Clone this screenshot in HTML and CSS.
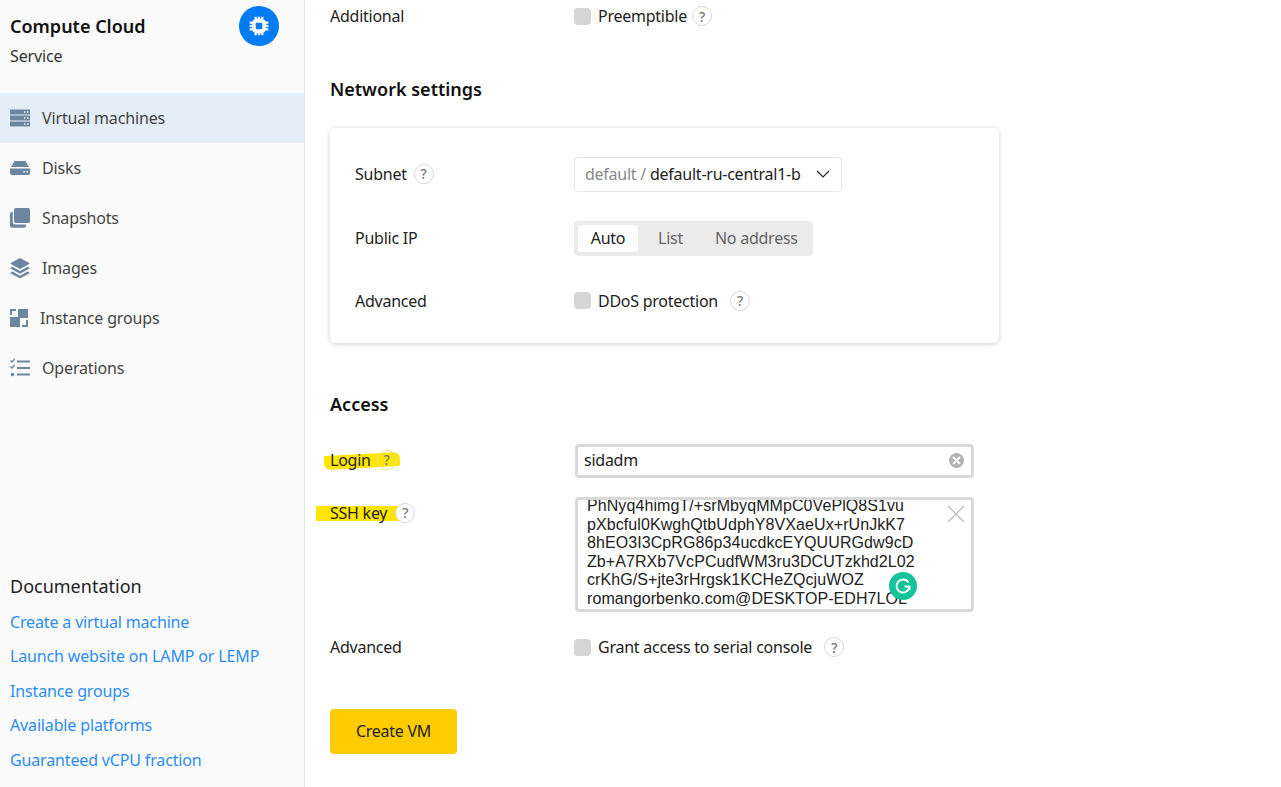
FILE: index.html
```html
<!DOCTYPE html>
<html lang="en">
<head>
    <meta charset="UTF-8">
    <meta name="viewport" content="width=device-width, initial-scale=1.0">
    <title>Compute Cloud</title>
    <link rel="stylesheet" href="styles.css">
</head>
<body>
    <aside class="sidebar">
        <div class="service">
            <div>
                <h1 class="service-name">Compute Cloud</h1>
                <p class="service-type">Service</p>
            </div>
            <span class="service-logo">
                <svg width="22" height="22" viewBox="0 0 20 20">
                    <path fill="#fff" d="M6 1.500h2v2h1v-2h2v2h1v-2h2v2.700A2 2 0 0 1 15.800 6h2.700v2h-2v1h2v2h-2v1h2v2h-2.700a2 2 0 0 1-1.800 1.800v2.700h-2v-2h-1v2H9v-2H8v2H6v-2.700A2 2 0 0 1 4.200 14H1.500v-2h2v-1h-2V9h2V8h-2V6h2.700A2 2 0 0 1 6 4.200z"/>
                    <rect x="7" y="7" width="6" height="6" rx="1" fill="#027bf3"/>
                </svg>
            </span>
        </div>
        <nav class="menu">
            <a class="menu-item active">
                <svg class="menu-icon" viewBox="0 0 20 20"><path fill-rule="evenodd" d="M0 1.500h20v5H0zM0 7.500h20v5H0zM0 13.500h20v5H0zM14 3.300v1.400h1.500V3.300zM17 3.300v1.400h1.500V3.300zM14 9.300v1.400h1.500V9.300zM17 9.300v1.400h1.500V9.300zM14 15.300v1.400h1.500v-1.400zM17 15.300v1.400h1.500v-1.400z"/></svg>
                Virtual machines
            </a>
            <a class="menu-item">
                <svg class="menu-icon" viewBox="0 0 20 20"><path fill-rule="evenodd" d="M4.500 3h11L19 9H1zM0 10.500h20V15a2 2 0 0 1-2 2H2a2 2 0 0 1-2-2zM13.500 13v1.500H15V13zM16.500 13v1.500H18V13z"/></svg>
                Disks
            </a>
            <a class="menu-item">
                <svg class="menu-icon" viewBox="0 0 20 20"><rect x="4" y="0" width="16" height="15" rx="2"/><path d="M0 6a2 2 0 0 1 2-2h0.800v10a2.500 2.500 0 0 0 2.500 2.500H16v1.300a2 2 0 0 1-2 2H2a2 2 0 0 1-2-2z"/></svg>
                Snapshots
            </a>
            <a class="menu-item">
                <svg class="menu-icon" viewBox="0 0 20 20"><path d="M10 0l10 5.500-10 5.500L0 5.500zM2.500 8.800L10 13l7.500-4.200L20 10.200 10 15.800 0 10.200zM2.500 13.500L10 17.700l7.500-4.200L20 15l-10 5.500L0 15z"/></svg>
                Images
            </a>
            <a class="menu-item">
                <svg class="menu-icon menu-icon-wide" viewBox="0 0 18 18"><path d="M6 0H0v6h2V2h4zM8 0h10v9H8zM0 8h10v10H0zM12 11h6v7h-6v-2h4v-5h-4z"/></svg>
                Instance groups
            </a>
            <a class="menu-item">
                <svg class="menu-icon" viewBox="0 0 20 20"><path d="M7 2.500h13v2H7zM7 9h13v2H7zM7 15.500h13v2H7z"/><path d="M0.500 2.500l1.500 1.500 2.800-3" fill="none" stroke="#6d86a0" stroke-width="1.300"/><path d="M0.500 8.500l1.500 1.500 2.800-3" fill="none" stroke="#6d86a0" stroke-width="1.300"/><circle cx="2.500" cy="16.500" r="1.800"/></svg>
                Operations
            </a>
        </nav>
        <div class="docs">
            <h2 class="docs-title">Documentation</h2>
            <a class="docs-link">Create a virtual machine</a>
            <a class="docs-link">Launch website on LAMP or LEMP</a>
            <a class="docs-link">Instance groups</a>
            <a class="docs-link">Available platforms</a>
            <a class="docs-link">Guaranteed vCPU fraction</a>
        </div>
    </aside>

    <main class="content">
        <div class="row row-additional">
            <span class="row-label">Additional</span>
            <span class="check"></span>
            <span class="check-label">Preemptible</span>
            <span class="hint hint-near">?</span>
        </div>

        <h2 class="section-title section-network">Network settings</h2>

        <section class="card">
            <div class="card-row">
                <span class="card-label card-label-subnet">Subnet <span class="hint hint-label">?</span></span>
                <div class="select">
                    <span class="select-folder">default /</span>
                    <span>default-ru-central1-b</span>
                    <svg class="select-arrow" width="14" height="8" viewBox="0 0 14 8"><path d="M1 1l6 6 6-6" fill="none" stroke="#222" stroke-width="1.200"/></svg>
                </div>
            </div>
            <div class="card-row">
                <span class="card-label">Public IP</span>
                <div class="switch">
                    <span class="switch-item switch-on">Auto</span>
                    <span class="switch-item">List</span>
                    <span class="switch-item">No address</span>
                </div>
            </div>
            <div class="card-row">
                <span class="card-label">Advanced</span>
                <span class="check"></span>
                <span class="check-label">DDoS protection</span>
                <span class="hint hint-far">?</span>
            </div>
        </section>

        <h2 class="section-title section-access">Access</h2>

        <div class="row row-login">
            <span class="row-label marked">
                <span class="marker marker-login"></span>
                <span class="marked-text">Login <span class="hint hint-login">?</span></span>
            </span>
            <div class="field">
                <span class="field-value">sidadm</span>
                <span class="field-clear">
                    <svg width="9" height="9" viewBox="0 0 9 9"><path d="M1 1l7 7M8 1L1 8" stroke="#fff" stroke-width="1.800"/></svg>
                </span>
            </div>
        </div>

        <div class="row row-ssh">
            <span class="row-label marked">
                <span class="marker marker-ssh"></span>
                <span class="marked-text">SSH key<span class="hint hint-ssh">?</span></span>
            </span>
            <div class="keybox">
                <div class="keybox-text">PhNyq4himgT/+srMbyqMMpC0VePlQ8S1vu<br>pXbcful0KwghQtbUdphY8VXaeUx+rUnJkK7<br>8hEO3I3CpRG86p34ucdkcEYQUURGdw9cD<br>Zb+A7RXb7VcPCudfWM3ru3DCUTzkhd2L02<br>crKhG/S+jte3rHrgsk1KCHeZQcjuWOZ<br>romangorbenko.com@DESKTOP-EDH7LOL</div>
                <svg class="keybox-close" width="18" height="18" viewBox="0 0 18 18"><path d="M1 1l16 16M17 1L1 17" stroke="#b5b5b5" stroke-width="1.100"/></svg>
                <span class="grammarly">
                    <svg width="18" height="18" viewBox="0 0 18 18"><path d="M14.500 5.500A6.500 6.500 0 1 0 15.500 9.500H10.500M15.500 9.500v3.500" fill="none" stroke="#fff" stroke-width="1.900"/></svg>
                </span>
            </div>
        </div>

        <div class="row row-serial">
            <span class="row-label">Advanced</span>
            <span class="check"></span>
            <span class="check-label">Grant access to serial console</span>
            <span class="hint hint-far">?</span>
        </div>

        <button class="create-btn">Create VM</button>
    </main>
</body>
</html>
```

FILE: styles.css
```css
*{
    box-sizing: border-box;
    font-family: "Noto Sans", Arial, sans-serif;
}
html, body{
    height: 100%;
}
body{
    margin: 0;
    display: flex;
    height: 787px;
    overflow: hidden;
    background-color: white;
    color: #222;
    font-size: 16px;
}
h1, h2, p{
    margin: 0;
}

/* sidebar */
.sidebar{
    width: 305px;
    flex-shrink: 0;
    display: flex;
    flex-direction: column;
    background-color: #fafafa;
    border-right: 1px solid #e6e6e6;
    letter-spacing: -0.15px;
}
.service{
    height: 93px;
    padding: 7px 25px 0 10px;
    display: flex;
    justify-content: space-between;
    align-items: flex-start;
}
.service-name{
    font-size: 18px;
    font-weight: 600;
    line-height: 26px;
    margin-top: 6px;
    letter-spacing: 0;
    color: #111;
}
.service-type{
    line-height: 22px;
    margin-top: 6px;
    color: #333;
}
.service-logo{
    width: 40px;
    height: 40px;
    margin-top: -1px;
    border-radius: 50%;
    background-color: #027bf3;
    display: flex;
    align-items: center;
    justify-content: center;
}
.menu-item{
    height: 50px;
    padding: 0 0 1px 10px;
    display: flex;
    align-items: center;
    gap: 12px;
    color: #444;
}
.menu-item.active{
    background-color: #e4eef8;
}
.menu-icon{
    width: 20px;
    height: 20px;
    fill: #6d86a0;
}
.menu-icon-wide{
    width: 18px;
    height: 18px;
}
.docs{
    margin-top: auto;
    padding: 0 10px 10px;
    display: flex;
    flex-direction: column;
}
.docs-title{
    font-size: 18px;
    font-weight: 400;
    line-height: 24px;
    margin-bottom: 7px;
    letter-spacing: 0;
    color: #222;
}
.docs-link{
    height: 34.500px;
    line-height: 34.500px;
    color: #2b8df0;
}

/* main column */
.content{
    flex: 1;
    padding-left: 25px;
    letter-spacing: -0.25px;
}
.row{
    display: flex;
    align-items: center;
}
.row-label{
    width: 244px;
    flex-shrink: 0;
}
.row-additional{
    height: 32px;
}
.check{
    width: 17px;
    height: 17px;
    border-radius: 4px;
    background-color: #d6d6d6;
    flex-shrink: 0;
}
.check-label{
    margin-left: 7px;
}
.hint{
    display: inline-flex;
    align-items: center;
    justify-content: center;
    width: 20px;
    height: 20px;
    border: 1px solid #d8d8d8;
    border-radius: 50%;
    color: #777;
    font-size: 14px;
    font-weight: 500;
}
.hint-near{
    margin-left: 5px;
}
.hint-far{
    margin-left: 12px;
}
.hint-label{
    margin-left: 3px;
    vertical-align: 1px;
}
.section-title{
    font-size: 18px;
    font-weight: 600;
    line-height: 26px;
    letter-spacing: 0;
    color: #111;
}
.section-network{
    margin-top: 44px;
}
.card{
    width: 669px;
    height: 215px;
    margin-top: 26px;
    padding: 15px 25px 10px;
    background-color: white;
    border-radius: 6px;
    box-shadow: 0 1px 5px rgba(0, 0, 0, 0.2);
    display: flex;
    flex-direction: column;
}
.card-row{
    height: 63px;
    display: flex;
    align-items: center;
}
.card-label{
    width: 219px;
    flex-shrink: 0;
}
.card-label-subnet{
    padding-bottom: 1px;
}
.select{
    width: 268px;
    height: 35px;
    padding: 0 11px 1px 10px;
    border: 1px solid #e6e6e6;
    border-radius: 4px;
    display: flex;
    align-items: center;
    gap: 4px;
}
.select-folder{
    color: #888;
}
.select-arrow{
    margin-left: auto;
}
.switch{
    height: 35px;
    margin-top: 1px;
    padding: 4px;
    background-color: #ebebeb;
    border-radius: 4px;
    display: flex;
    align-items: center;
    color: #666;
}
.switch-item{
    height: 27px;
    line-height: 27px;
    padding: 0 16px;
}
.switch-item:last-child{
    padding-right: 11px;
}
.switch-on{
    width: 60px;
    margin-right: 4px;
    padding: 0;
    text-align: center;
    background-color: white;
    border-radius: 3px;
    color: #222;
}
.section-access{
    margin-top: 48px;
}

/* login and key */
.row-login{
    height: 34px;
    margin-top: 27px;
}
.marked{
    position: relative;
}
.marked-text{
    position: relative;
}
.row-login .marked-text{
    top: -1px;
}
.marker{
    position: absolute;
    background-color: #ffe600;
}
.marker-login{
    left: -6px;
    top: 4px;
    width: 76px;
    height: 14px;
    transform: rotate(-3deg);
    border-radius: 2px 6px 2px 6px;
}
.marker-ssh{
    left: -14px;
    top: 4px;
    width: 85px;
    height: 15px;
}
.hint-login{
    margin-left: 2px;
    border-color: #dfe39a;
    vertical-align: 1px;
}
.hint-ssh{
    margin-left: 8px;
    background-color: white;
    vertical-align: 1px;
    position: relative;
}
.field{
    width: 399px;
    height: 34px;
    margin-left: 1px;
    padding: 0 7px 1px 6px;
    border: 3px solid #d9d9d9;
    border-radius: 4px;
    display: flex;
    align-items: center;
    justify-content: space-between;
    color: #222;
}
.field-value{
    margin-bottom: 2px;
}
.field-clear{
    width: 15px;
    height: 15px;
    border-radius: 50%;
    background-color: #b3b3b3;
    display: flex;
    align-items: center;
    justify-content: center;
}
.row-ssh{
    align-items: flex-start;
    margin-top: 19px;
}
.row-ssh .row-label{
    margin-top: 5px;
}
.keybox{
    position: relative;
    width: 399px;
    height: 115px;
    margin-left: 1px;
    border: 3px solid #d9d9d9;
    border-radius: 4px;
    overflow: hidden;
}
.keybox-text{
    margin-top: -3px;
    padding-left: 9px;
    font-family: "Liberation Sans", Arial, sans-serif;
    font-size: 16px;
    line-height: 18.600px;
    white-space: nowrap;
    letter-spacing: 0.08px;
    color: #222;
}
.keybox-close{
    position: absolute;
    right: 6px;
    top: 5px;
}
.grammarly{
    position: absolute;
    left: 311px;
    top: 72px;
    width: 28px;
    height: 28px;
    border-radius: 50%;
    background-color: #15c39a;
    display: flex;
    align-items: center;
    justify-content: center;
}
.row-serial{
    height: 34px;
    margin-top: 18px;
}
.create-btn{
    display: block;
    width: 127px;
    height: 45px;
    margin-top: 45px;
    padding-bottom: 3px;
    border: none;
    border-radius: 4px;
    background-color: #fc0;
    color: #222;
    font-size: 16px;
    letter-spacing: -0.25px;
}
```
